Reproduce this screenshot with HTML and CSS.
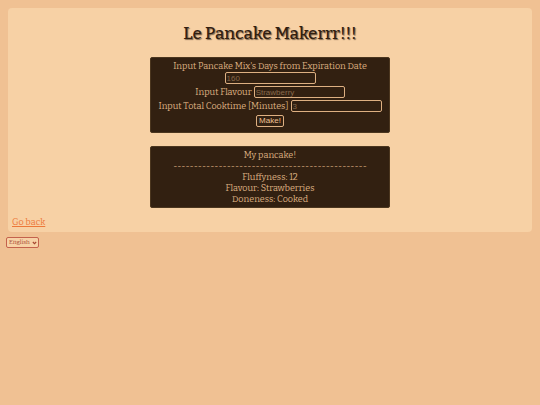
FILE: index.html
```html
<!DOCTYPE html>
<html lang="en">
<head>
<meta charset="utf-8">
<title>Le Pancake Makerrr!!!</title>
<link rel="stylesheet" href="styles.css">
</head>
<body>
<main class="page">
  <h1 class="title">Le Pancake Makerrr!!!</h1>
  <form class="box form">
    <div class="row"><label for="days">Input Pancake Mix's Days from Expiration Date</label> <input class="field" id="days" type="text" placeholder="160"></div>
    <div class="row"><label for="flavour">Input Flavour</label> <input class="field" id="flavour" type="text" placeholder="Strawberry"></div>
    <div class="row"><label for="time">Input Total Cooktime [Minutes]</label> <input class="field" id="time" type="text" placeholder="3"></div>
    <button class="make" type="button">Make!</button>
  </form>
  <section class="box result">
    <p class="line">My pancake!</p>
    <p class="line">-----------------------------------------------</p>
    <p class="line">Fluffyness: 12</p>
    <p class="line">Flavour: Strawberries</p>
    <p class="line">Doneness: Cooked</p>
  </section>
  <a class="back" href="#">Go back</a>
</main>
<div class="language">
  <select class="select" aria-label="Language"><option>English</option></select>
  <svg class="chevron" viewBox="0 0 6 4" aria-hidden="true"><path d="M1 .8 3 2.8 5 .8"/></svg>
</div>
</body>
</html>
```
FILE: styles.css
```css
* { box-sizing: border-box; }
body {
  margin: 0;
  padding: 8px 6px;
  background: #f0c193;
  color: #322011;
  font: 9px/11px Bitter, "DejaVu Serif Condensed", "DejaVu Serif", serif;
}
.page {
  display: flex;
  flex-direction: column;
  align-items: center;
  margin: 0 2px;
  padding: 15px 4px 4px;
  border-radius: 4px;
  background: #f7d1a5;
}
.title {
  margin: 0 0 12px;
  font-size: 17px;
  line-height: 22px;
  font-weight: 500;
  color: #322011;
  text-shadow: 1px 1px 1px #32201199;
}
.box {
  width: 46%;
  min-width: 240px;
  border: 1px solid #4b361f;
  border-radius: 2px;
  background: #322011;
  color: #deb082;
  text-align: center;
}
.form {
  display: flex;
  flex-direction: column;
  align-items: center;
  gap: 2px;
  margin-bottom: 13px;
  padding: 3px 4px 5px;
}
.row {
  display: flex;
  flex-wrap: wrap;
  justify-content: center;
  align-items: center;
  column-gap: 2px;
}
.field {
  width: 91px;
  height: 12px;
  padding: 0 1px;
  border: 1px solid #deb082;
  border-radius: 2px;
  background: #322011;
  color: #deb082;
  font: 8px/10px "Liberation Sans", sans-serif;
}
.field::placeholder { color: #88694b; opacity: 1; }
.make {
  margin-top: 1px;
  padding: 0 2px;
  border: 1px solid #deb082;
  border-radius: 2px;
  background: #322011;
  color: #f0c193;
  font: 8px/10px "Liberation Sans", sans-serif;
}
.result { padding: 3px 8px 2px; }
.line { margin: 0; }
.back {
  align-self: flex-start;
  margin-top: 9px;
  color: #ed7839;
}
.language {
  position: relative;
  width: 33px;
  margin-top: 5px;
}
.select {
  display: block;
  width: 100%;
  height: 11px;
  padding: 0 0 0 2px;
  appearance: none;
  border: 1px solid #c4624c;
  border-radius: 2px;
  background: #f7d1a5;
  color: #a4452f;
  font: 6px/9px Bitter, "DejaVu Serif Condensed", "DejaVu Serif", serif;
}
.chevron {
  position: absolute;
  top: 4px;
  right: 2px;
  width: 5px;
  height: 4px;
  fill: none;
  stroke: #a4452f;
  stroke-width: 1.3;
  pointer-events: none;
}
```
